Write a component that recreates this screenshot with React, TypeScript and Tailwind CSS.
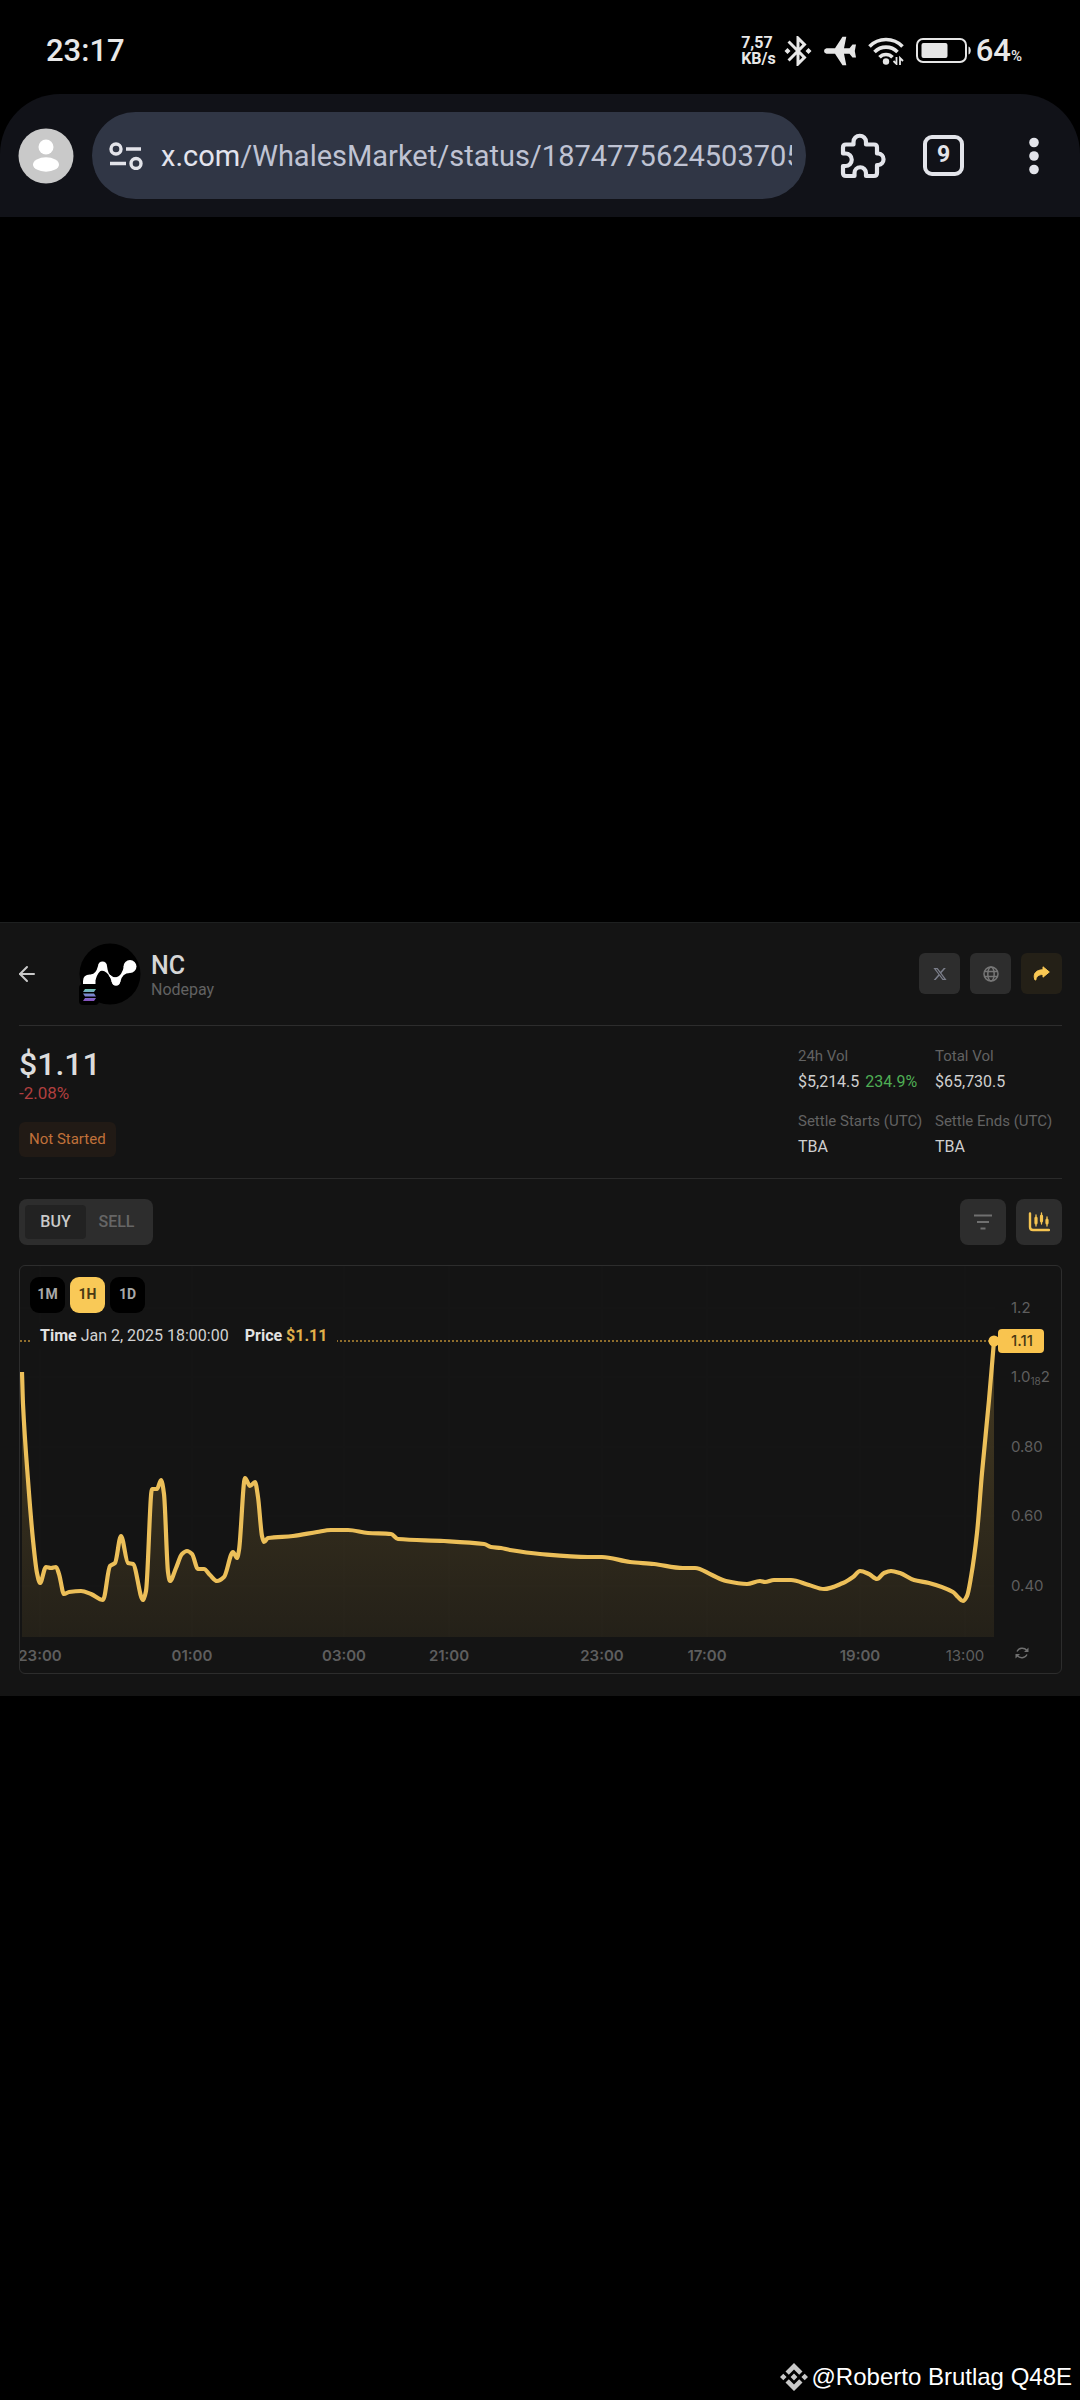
import { ArrowLeft } from 'lucide-react';
import { MdBluetoothConnected } from 'react-icons/md';
import { RiTwitterXFill } from 'react-icons/ri';

// plot coordinates: x 0-975, y 0-371
const PLOT_W = 975;
const PLOT_H = 371;
const PRICE_Y = 75;

const series: [number, number][] = [
  [2, 106], [3, 138], [8, 214], [13, 274], [17, 307], [20, 317], [26, 301],
  [31, 302], [36, 301], [39, 308], [44, 328], [49, 326], [61, 325], [71, 328],
  [83, 334], [90, 300], [95, 297], [101, 270], [108, 297], [113, 298],
  [123, 334], [126, 325], [132, 223], [137, 223], [141, 214], [144, 228],
  [148, 306], [150, 315], [156, 302], [162, 288], [167, 285], [172, 288],
  [178, 303], [184, 303], [190, 309], [197, 315], [204, 311], [213, 286],
  [217, 292], [219, 284], [225, 212], [230, 220], [235, 216], [238, 231],
  [242, 270], [244, 276], [248, 272], [273, 270], [297, 266], [311, 264],
  [328, 264], [348, 267], [371, 268], [378, 273], [424, 275], [464, 278],
  [471, 281], [481, 282], [490, 284], [520, 288], [568, 291], [582, 291],
  [610, 296], [634, 298], [663, 302], [675, 302], [692, 309], [706, 315],
  [727, 318], [740, 315], [745, 316], [754, 314], [771, 314], [789, 319],
  [804, 323], [823, 317], [833, 311], [840, 305], [849, 308], [857, 313],
  [864, 307], [871, 305], [880, 307], [894, 314], [909, 317], [933, 326],
  [938, 331], [943, 335], [947, 330], [951, 311], [957, 267], [962, 207],
  [969, 134], [974, 75],
];

const timeTicks = [
  { label: '23:00', at: 20, bold: true },
  { label: '01:00', at: 172, bold: true },
  { label: '03:00', at: 324, bold: true },
  { label: '21:00', at: 429, bold: true },
  { label: '23:00', at: 582, bold: true },
  { label: '17:00', at: 687, bold: true },
  { label: '19:00', at: 840, bold: true },
  { label: '13:00', at: 945, bold: false },
];

const gridRows = [42, 111, 181, 250, 320];

// monotone cubic through the samples, so the flat tops do not overshoot
const smoothPath = (pts: [number, number][]) => {
  const slope = (i: number) => (pts[i + 1][1] - pts[i][1]) / (pts[i + 1][0] - pts[i][0]);
  const tangents = pts.map((_, i) => {
    if (i === 0) return slope(0);
    if (i === pts.length - 1) return slope(i - 1);
    const a = slope(i - 1);
    const b = slope(i);
    return a * b <= 0 ? 0 : (2 * a * b) / (a + b);
  });
  return pts.reduce((d, [x, y], i) => {
    if (i === 0) return `M${x} ${y}`;
    const [px, py] = pts[i - 1];
    const h = (x - px) / 3;
    return `${d}C${px + h} ${py + tangents[i - 1] * h} ${x - h} ${y - tangents[i] * h} ${x} ${y}`;
  }, '');
};

const linePath = smoothPath(series);

const PlaneIcon = () => (
  <svg viewBox="0 0 32 30" className="h-[30px] w-8" fill="#e6e6e6">
    <path d="M2.500 12.300H11L18.500 .8H22.300L20 12.300H25.500L28.500 8.500H32L30.800 15L32 21.500H28.500L25.500 17.700H20L22.300 29.200H18.500L11 17.700H2.500Q0 17.300 0 15T2.500 12.300Z" />
  </svg>
);

const WifiIcon = () => (
  <svg viewBox="0 0 36 28" className="h-7 w-9" fill="none" stroke="#e6e6e6" strokeWidth="3.600">
    <path d="M1.500 9.500C10.500 .2 25.500 .2 34.500 9.500" />
    <path d="M6.500 15C13 8.500 23 8.500 29.500 15" />
    <path d="M11.500 20.200C15 16.500 21 16.500 24.500 20.200" />
    <circle cx="18" cy="24.500" r="3.200" fill="#e6e6e6" stroke="none" />
    <path d="M28.500 20V27L25.500 24M32 28V21L35 24" strokeWidth="1.800" />
  </svg>
);

const BatteryIcon = () => (
  <svg viewBox="0 0 56 26" className="h-[26px] w-14" fill="none">
    <rect x="1" y="1" width="49" height="23" rx="6" stroke="#e6e6e6" strokeWidth="2" />
    <rect x="5.500" y="5" width="26" height="15" rx="2" fill="#e6e6e6" />
    <path d="M52.500 8.500C55.500 9.500 55.500 15.500 52.500 16.500Z" fill="#e6e6e6" />
  </svg>
);

const StatusBar = () => (
  <header className="flex h-[94px] items-center justify-between pt-2 pl-[46px] pr-[58px] text-[#e8e8e8]">
    <time className="text-[31px] font-medium">23:17</time>
    <div className="flex items-center">
      <p className="text-[16px] leading-4 font-bold">
        7,57
        <br />
        KB/s
      </p>
      <MdBluetoothConnected className="ml-1 size-9" />
      <span className="ml-2">
        <PlaneIcon />
      </span>
      <span className="ml-3">
        <WifiIcon />
      </span>
      <span className="ml-3">
        <BatteryIcon />
      </span>
      <p className="ml-1 text-[31px] font-medium">
        64<span className="text-[15px]">%</span>
      </p>
    </div>
  </header>
);

const ExtensionIcon = () => (
  <svg viewBox="0 0 46 46" className="size-[46px]" fill="none" stroke="#e3e4ea" strokeWidth="4.200" strokeLinejoin="round">
    <path d="M3 20.500V14.500Q3 11.500 6 11.500H13.500V9A6.200 6.200 0 0 1 26 9V11.500H34Q37 11.500 37 14.500V20.500H38.500A5.800 5.800 0 0 1 38.500 32H37V40Q37 43 34 43H26V40A5.700 5.700 0 0 0 14.500 40V43H6Q3 43 3 40V33H5.500A6 6 0 0 0 5.500 20.500Z" />
  </svg>
);

const BrowserBar = () => (
  <nav className="flex h-[123px] items-center rounded-t-[60px] bg-[#111218] pl-[18px] pr-8 text-[#e3e4ea]">
    <button aria-label="Account" className="size-14 shrink-0">
      <svg viewBox="0 0 56 56">
        <circle cx="28" cy="28" r="27.500" fill="#c9c9c9" />
        <circle cx="28" cy="19" r="7.500" fill="#fff" />
        <ellipse cx="28" cy="36.500" rx="13" ry="7.200" fill="#fff" />
      </svg>
    </button>
    <div className="ml-[18px] flex h-[87px] min-w-0 flex-1 items-center gap-[18px] rounded-full bg-[#303645] pr-[14px] pl-[17px]">
      <button aria-label="Site settings" className="h-7 w-[34px] shrink-0">
        <svg viewBox="0 0 34 28" fill="none" stroke="#e3e4ea" strokeWidth="3.400">
          <circle cx="7" cy="7" r="5" />
          <path d="M17 7H32M1 21.500H17" />
          <circle cx="27" cy="21.500" r="5" />
        </svg>
      </button>
      <a
        href="#status"
        className="min-w-0 flex-1 overflow-hidden text-[29px] leading-10 whitespace-nowrap text-[#bfc3d3]"
      >
        <span className="text-[#e3e4ee]">x.com</span>/WhalesMarket/status/1874775624503705
      </a>
    </div>
    <button aria-label="Extensions" className="ml-[34px] shrink-0">
      <ExtensionIcon />
    </button>
    <button
      aria-label="Open tabs"
      className="ml-[37px] flex size-[41px] shrink-0 items-center justify-center rounded-[9px] border-4 border-[#e3e4ea] text-[23px] font-bold"
    >
      9
    </button>
    <button aria-label="More" className="ml-14 h-10 w-7 shrink-0">
      <svg viewBox="0 0 28 40" fill="#e3e4ea">
        <circle cx="14" cy="6.500" r="4.800" />
        <circle cx="14" cy="20" r="4.800" />
        <circle cx="14" cy="33.500" r="4.800" />
      </svg>
    </button>
  </nav>
);

const TokenLogo = () => (
  <svg viewBox="0 0 62 62" className="size-[62px]">
    <defs>
      <linearGradient id="sol" x1="0" y1="0" x2="0" y2="1">
        <stop offset="0" stopColor="#6fc3b0" />
        <stop offset="0.500" stopColor="#7a86cf" />
        <stop offset="1" stopColor="#8650bd" />
      </linearGradient>
    </defs>
    <circle cx="31" cy="31" r="30.500" fill="#000" />
    <g fill="#fff">
      <path d="M4 41V38Q4 31.500 11 31.500H16.500V41Z" />
      <circle cx="23.500" cy="23" r="4.500" />
      <circle cx="37" cy="38.500" r="4.300" />
      <circle cx="51" cy="23.500" r="6.500" />
      <path d="M12 31.500Q17 31 19 23L28 23Q29 32 33 33.500L31.500 35Q28 28 23 27.500Q19 28 16.500 37Z" />
      <path d="M30.500 31.500Q34 34.500 37 34.500Q43 33 45 23L51 30Q43 30 41.300 39H32.700Q32 35 29.500 32Z" />
    </g>
    <rect y="41" width="20" height="21" rx="4" fill="#000" />
    <path
      d="M6 46H17L15 49H4ZM4 50.500H15L17 53.500H6ZM6 55H17L15 58H4Z"
      fill="url(#sol)"
    />
  </svg>
);

const GlobeIcon = () => (
  <svg viewBox="0 0 16 16" className="size-4" fill="none" stroke="#777" strokeWidth="1.500">
    <circle cx="8" cy="8" r="7" />
    <ellipse cx="8" cy="8" rx="3.200" ry="7" />
    <path d="M1.500 5.500H14.500M1.500 10.500H14.500" />
  </svg>
);

const ShareIcon = () => (
  <svg viewBox="0 0 17 15" className="h-[15px] w-[17px]" fill="#f9c854" stroke="#f9c854" strokeLinejoin="round">
    <path d="M2 14C-.5 8 3 3.800 10 3.800V.8L16.300 6L10 11.200V8.500C6 8.500 3.500 10 2.800 14Z" />
  </svg>
);

const TokenHeader = () => (
  <div className="flex h-[103px] items-center border-b border-[#2d2d2d]">
    <button aria-label="Back" className="text-[#c9c9c9]">
      <ArrowLeft className="-ml-1 size-6" strokeWidth={2} />
    </button>
    <span className="ml-10">
      <TokenLogo />
    </span>
    <div className="ml-[10px] pt-1">
      <h1 className="text-[25px] leading-7 font-medium text-[#d6d6d6]">NC</h1>
      <p className="text-[16px] leading-5 text-[#626262]">Nodepay</p>
    </div>
    <div className="ml-auto flex gap-[10px]">
      <a href="#x" aria-label="X" className="flex size-[41px] items-center justify-center rounded-md bg-[#2d2d2d] text-[#7b7e8a]">
        <RiTwitterXFill className="size-4" />
      </a>
      <a href="#site" aria-label="Website" className="flex size-[41px] items-center justify-center rounded-md bg-[#2d2d2d]">
        <GlobeIcon />
      </a>
      <button aria-label="Share" className="flex size-[41px] items-center justify-center rounded-md bg-[#242017]">
        <ShareIcon />
      </button>
    </div>
  </div>
);

const Stat = ({ label, value, change }: { label: string; value: string; change?: string }) => (
  <div>
    <dt className="text-[15px] text-[#626262]">{label}</dt>
    <dd className="flex gap-[6px] text-[16px] text-[#cfcfcf]">
      {value}
      {change && <span className="text-[#4fae54]">{change}</span>}
    </dd>
  </div>
);

const PriceSummary = () => (
  <div className="flex h-[153px] justify-between border-b border-[#2a2a2a] pt-[18px]">
    <div>
      <p className="text-[32px] leading-10 font-medium text-[#dcdcdc]">$1.11</p>
      <p className="text-[17px] leading-[18px] text-[#b03f3f]">-2.08%</p>
      <span className="mt-5 inline-block rounded-md bg-[#211a15] px-[10px] text-[15px] leading-[35px] text-[#c0713a]">
        Not Started
      </span>
    </div>
    <dl className="grid grid-cols-[137px_127px] content-start gap-y-[15px] leading-[25px]">
      <Stat label="24h Vol" value="$5,214.5" change="234.9%" />
      <Stat label="Total Vol" value="$65,730.5" />
      <Stat label="Settle Starts (UTC)" value="TBA" />
      <Stat label="Settle Ends (UTC)" value="TBA" />
    </dl>
  </div>
);

const ChartToolbar = () => (
  <div className="flex items-center py-5">
    <div className="flex h-[46px] items-center rounded-lg bg-[#2d2d2d] p-[6px] text-[16px] font-medium">
      <button className="h-[34px] w-[61px] rounded bg-[#222222] text-[#cacaca]">BUY</button>
      <button className="h-[34px] w-[61px] rounded text-[#666666]">SELL</button>
    </div>
    <button aria-label="Filter" className="ml-auto flex size-[46px] items-center justify-center rounded-lg bg-[#2d2d2d]">
      <svg viewBox="0 0 18 16" className="h-4 w-[18px]" stroke="#707070" strokeWidth="2">
        <path d="M0 1.500H18M3 8H15M6.500 14.500H11.500" />
      </svg>
    </button>
    <button aria-label="Chart" className="ml-[10px] flex size-[46px] items-center justify-center rounded-lg bg-[#2d2d2d]">
      <svg viewBox="0 0 22 20" className="h-5 w-[22px]" fill="none" stroke="#f5c451" strokeLinecap="round">
        <path d="M2 1.500V15Q2 18 5 18H21" strokeWidth="2.400" />
        <path d="M8 3V14M13.500 1V12M19 5V14" strokeWidth="1.300" />
        <path d="M8 6V11M13.500 4V9M19 8V11" strokeWidth="3.200" />
      </svg>
    </button>
  </div>
);

const Plot = () => (
  <svg
    viewBox={`0 0 ${PLOT_W} ${PLOT_H}`}
    preserveAspectRatio="none"
    className="block h-[371px] w-full overflow-visible"
    fill="none"
  >
    <defs>
      <linearGradient id="area" gradientUnits="userSpaceOnUse" x1="0" y1="75" x2="0" y2="371">
        <stop offset="0" stopColor="#f5c453" stopOpacity="0.220" />
        <stop offset="1" stopColor="#f5c453" stopOpacity="0.070" />
      </linearGradient>
    </defs>
    <g stroke="#171717">
      {timeTicks.map((t) => (
        <path key={t.at} d={`M${t.at} 0V${PLOT_H}`} />
      ))}
      {gridRows.map((y) => (
        <path key={y} d={`M0 ${y}H${PLOT_W}`} />
      ))}
    </g>
    <path d={`M0 ${PRICE_Y}H${PLOT_W}`} stroke="#8f6d2c" strokeWidth="2" strokeDasharray="2 2" />
    <path d={`${linePath}V${PLOT_H}H2Z`} fill="url(#area)" />
    <path d={linePath} stroke="#ecbf59" strokeWidth="4.200" strokeLinejoin="round" />
    <circle cx="974" cy={PRICE_Y} r="5.500" fill="#f9c44f" />
  </svg>
);

const ranges = ['1M', '1H', '1D'];

const ChartOverlay = () => (
  <div className="absolute top-[11px] left-[10px] font-['Roboto',sans-serif]">
    <div className="flex gap-[5px]">
      {ranges.map((r) => (
        <button
          key={r}
          className={`h-9 w-[35px] rounded-[9px] text-[14px] font-bold ${
            r === '1H' ? 'bg-[#f9c957] text-[#4a3a14]' : 'bg-black text-[#a8a8a8]'
          }`}
        >
          {r}
        </button>
      ))}
    </div>
    <p className="mt-[10px] flex gap-4 bg-[#141414] px-[10px] text-[16px] leading-[26px] whitespace-nowrap text-[#d2d2d2]">
      <span>
        <b className="text-[#e2e2e2]">Time</b> Jan 2, 2025 18:00:00
      </span>
      <span>
        <b className="text-[#e2e2e2]">Price</b> <b className="text-[#e0b04a]">$1.11</b>
      </span>
    </p>
  </div>
);

const RefreshIcon = () => (
  <svg viewBox="0 0 14 12" className="h-3 w-[14px]" fill="none" stroke="#707070" strokeWidth="1.300">
    <path d="M2 4.500C4 .5 9 .2 12 3.500M12 7.500C10 11.500 5 11.800 2 8.500" />
    <path d="M13.500 .5V5H9ZM.5 11.500V7H5Z" fill="#707070" stroke="none" />
  </svg>
);

const PriceChart = () => (
  <section className="relative flex overflow-hidden rounded-md border border-[#2d2d2d] font-['Inter',sans-serif] text-[15px] text-[#5e5e5e]">
    <div className="min-w-0 flex-1">
      <Plot />
      <div className="flex h-9 items-center pt-[3px]">
        {timeTicks.map((t, i) => (
          <div
            key={t.at}
            className="flex basis-0 justify-end"
            style={{ flexGrow: t.at - (timeTicks[i - 1]?.at ?? 0) }}
          >
            <span className={`flex w-0 justify-center ${t.bold ? 'font-semibold' : ''}`}>{t.label}</span>
          </div>
        ))}
        <div className="basis-0" style={{ flexGrow: PLOT_W - 945 }} />
      </div>
    </div>
    <div className="relative w-[66px] pl-4">
      <div className="flex h-[371px] flex-col justify-between pt-8 pb-[41px] leading-5">
        <span>1.2</span>
        <span>
          1.0<sub className="text-[10px]">18</sub>2
        </span>
        <span>0.80</span>
        <span>0.60</span>
        <span>0.40</span>
      </div>
      <div className="absolute top-[63px] left-[3px] w-[46px] rounded-sm bg-[#f9c44f] pl-[13px] leading-6 font-medium text-[#4a3a14]">
        1.11
      </div>
      <button aria-label="Refresh" className="mt-[10px] ml-1 block">
        <RefreshIcon />
      </button>
    </div>
    <ChartOverlay />
  </section>
);

const Watermark = () => (
  <p className="absolute right-2 bottom-[9px] flex items-center gap-1 font-['Liberation_Sans',sans-serif] text-[24px] leading-7 text-white">
    <svg viewBox="0 0 28 28" className="size-7" fill="#c9c9c9">
      <path d="M14 0L22.500 8.500L19.200 11.700L14 6.500L8.800 11.700L5.500 8.500Z" />
      <path d="M14 28L22.500 19.500L19.200 16.300L14 21.500L8.800 16.300L5.500 19.500Z" />
      <path d="M14 10.600L17.400 14L14 17.400L10.600 14ZM3.300 10.700L6.600 14L3.300 17.300L0 14ZM24.700 10.700L28 14L24.700 17.300L21.400 14Z" />
    </svg>
    @Roberto Brutlag Q48E
  </p>
);

const App = () => {
  return (
    <div className="relative flex min-h-screen flex-col bg-black font-['Roboto',sans-serif]">
      <StatusBar />
      <BrowserBar />
      <main className="flex flex-1 flex-col justify-center">
        <article className="border-t border-[#1e2020] bg-[#141414] pr-[18px] pb-[22px] pl-[19px]">
          <TokenHeader />
          <PriceSummary />
          <ChartToolbar />
          <PriceChart />
        </article>
      </main>
      <Watermark />
    </div>
  );
};

export default App;
